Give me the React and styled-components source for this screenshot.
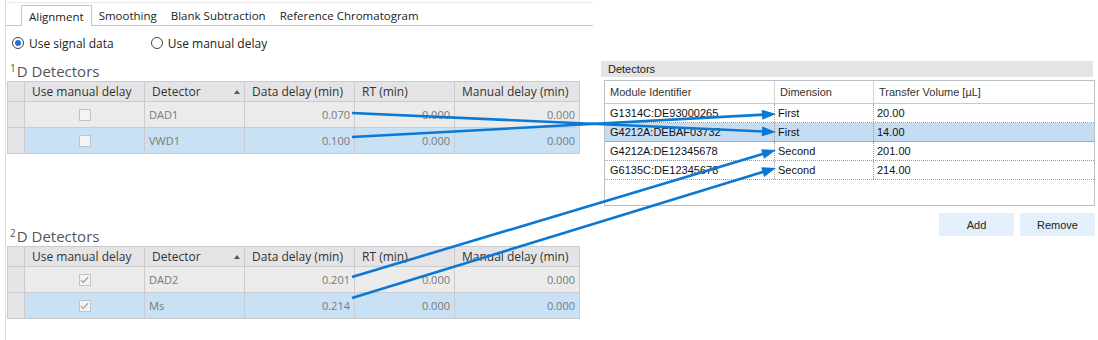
import React from 'react';
import styled, { createGlobalStyle } from 'styled-components';

const Global = createGlobalStyle`
  html, body { margin: 0; padding: 0; background: #fff; }
  body { font-family: "Open Sans", "Noto Sans", sans-serif; }
`;

const Page = styled.div`
  position: relative;
  width: 1098px;
  height: 340px;
  overflow: hidden;
  display: flex;
  align-items: flex-start;
  background: #fff;
`;

/* ---------- left panel ---------- */
const LeftPanel = styled.section`
  margin-left: 5px;
  width: 588px;
  height: 340px;
  box-sizing: border-box;
  border-left: 1px solid #dcdcdc;
  padding-top: 2px;
`;

const TabList = styled.div`
  display: flex;
  align-items: flex-end;
  height: 24px;
  box-sizing: border-box;
  border-top: 1px solid #ececec;
  border-bottom: 1px solid #c6c6c6;
  padding-left: 15px;
`;

const Tab = styled.div`
  height: 20px;
  display: flex;
  align-items: center;
  padding: 0 ${(p) => (p.$active ? '7px' : '6px')};
  margin-bottom: ${(p) => (p.$active ? '-1px' : '0')};
  background: #fff;
  border: ${(p) => (p.$active ? '1px solid #c6c6c6' : '1px solid transparent')};
  border-bottom: none;
  font-size: 11.5px;
  color: #222;
  white-space: nowrap;
`;

const RadioRow = styled.div`
  display: flex;
  align-items: center;
  gap: 37px;
  margin-top: 10px;
  padding-left: 6px;
  height: 14px;
`;

const RadioItem = styled.label`
  display: flex;
  align-items: center;
  gap: 5px;
  font-size: 12px;
  color: #222;
`;

const RadioCircle = styled.span`
  width: 12px;
  height: 12px;
  box-sizing: border-box;
  border-radius: 50%;
  border: 1px solid #444;
  display: flex;
  align-items: center;
  justify-content: center;
  background: #fff;
  &::after {
    content: '';
    width: 6px;
    height: 6px;
    border-radius: 50%;
    background: ${(p) => (p.$on ? '#1f74d0' : 'transparent')};
  }
`;

const Heading = styled.h2`
  margin: ${(p) => p.$top}px 0 0 0;
  padding-left: 4px;
  height: 19px;
  line-height: 19px;
  font-size: 15px;
  font-weight: 400;
  color: #555;
  white-space: nowrap;
`;

const Sup = styled.span`
  font-size: 10px;
  position: relative;
  top: -5px;
  margin-right: 1px;
`;

const TableGrid = styled.div`
  margin-left: 1px;
  display: grid;
  grid-template-columns: 16px 119px 99px 109px 99px 124px;
  grid-template-rows: 19px 25px 25px;
  gap: 1px;
  width: max-content;
  background: #cbcbcf;
  border: 1px solid #cbcbcf;
`;

const Corner = styled.div`
  background: #e4e4e6;
`;

const HeadCell = styled.div`
  background: #e4e4e6;
  display: flex;
  align-items: center;
  justify-content: space-between;
  padding: 0 4px 0 7px;
  font-size: 12px;
  color: #333;
  white-space: nowrap;
`;

const SortArrow = styled.span`
  width: 0;
  height: 0;
  border-left: 3px solid transparent;
  border-right: 3px solid transparent;
  border-bottom: 4px solid #555;
`;

const RowHead = styled.div`
  background: #e5e5e7;
`;

const Cell = styled.div`
  background: ${(p) => (p.$sel ? '#c8e1f4' : '#ebebec')};
  display: flex;
  align-items: center;
  justify-content: ${(p) => (p.$align === 'right' ? 'flex-end' : p.$align === 'center' ? 'center' : 'flex-start')};
  padding: 0 4px;
  font-size: 11px;
  color: #7a7a7a;
  white-space: nowrap;
`;

const CheckBox = styled.span`
  width: 12px;
  height: 12px;
  box-sizing: border-box;
  border: 1px solid #c3c3c3;
  background: #f4f4f4;
  display: flex;
  align-items: center;
  justify-content: center;
`;

/* ---------- right panel ---------- */
const RightPanel = styled.section`
  margin-left: 8px;
  margin-top: 61px;
  width: 494px;
  font-family: "Liberation Sans", Arial, sans-serif;
  font-size: 11px;
  color: #1a1a1a;
`;

const GroupBar = styled.div`
  width: 492px;
  height: 16px;
  line-height: 16px;
  box-sizing: border-box;
  padding-left: 7px;
  background: #e4e4e4;
  color: #222;
`;

const DataBox = styled.div`
  margin: 3px 0 0 3px;
  width: 491px;
  height: 126px;
  box-sizing: border-box;
  border: 1px solid #b8c1ca;
`;

const DataRow = styled.div`
  display: grid;
  grid-template-columns: 170px 99px 1fr;
  height: ${(p) => (p.$head ? 23 : 19)}px;
  box-sizing: border-box;
  border-bottom: 1px ${(p) => (p.$head ? 'solid #c8c8c8' : p.$sel ? 'solid #a9a9a9' : 'dotted #9c9c9c')};
  background: ${(p) => (p.$sel ? '#c6dcf3' : '#fff')};
`;

const DataCell = styled.div`
  display: flex;
  align-items: center;
  padding-left: ${(p) => (p.$first || p.$head ? 5 : 3)}px;
  border-right: 1px ${(p) => (p.$head ? 'solid #d6d6d6' : 'dotted #9c9c9c')};
  color: ${(p) => (p.$head ? '#333' : '#111')};
  white-space: nowrap;
  overflow: hidden;
  &:last-child { border-right: none; }
`;

const ButtonRow = styled.div`
  display: flex;
  justify-content: flex-end;
  gap: 6px;
  margin-top: 7px;
`;

const Button = styled.button`
  width: 75px;
  height: 23px;
  border: none;
  background: #e3f0fb;
  font-family: "Liberation Sans", Arial, sans-serif;
  font-size: 11px;
  color: #222;
  padding: 0;
`;

/* ---------- arrows overlay ---------- */
const ArrowLayer = styled.svg`
  position: absolute;
  left: 0;
  top: 0;
  pointer-events: none;
`;

const ARROW_COLOR = '#0b79d3';

function Arrow({ x1, y1, x2, y2 }) {
  const len = 14;
  const half = 5;
  const dx = x2 - x1;
  const dy = y2 - y1;
  const d = Math.hypot(dx, dy);
  const ux = dx / d;
  const uy = dy / d;
  const bx = x2 - ux * len;
  const by = y2 - uy * len;
  const px = -uy * half;
  const py = ux * half;
  const pts = `${x2},${y2} ${bx + px},${by + py} ${bx - px},${by - py}`;
  return (
    <g>
      <line x1={x1} y1={y1} x2={bx + ux * 2} y2={by + uy * 2} stroke={ARROW_COLOR} strokeWidth="2.6" />
      <polygon points={pts} fill={ARROW_COLOR} />
    </g>
  );
}

const Check = () => (
  <svg width="9" height="8" viewBox="0 0 9 8">
    <path d="M1 4.2 L3.4 6.4 L8 1.2" fill="none" stroke="#a3a3a3" strokeWidth="1.3" />
  </svg>
);

function DetectorTable({ rows, checked }) {
  const headers = ['Use manual delay', 'Detector', 'Data delay (min)', 'RT (min)', 'Manual delay (min)'];
  return (
    <TableGrid>
      <Corner />
      {headers.map((h) => (
        <HeadCell key={h}>
          {h}
          {h === 'Detector' && <SortArrow />}
        </HeadCell>
      ))}
      {rows.map((r, i) => {
        const sel = i === 1;
        return (
          <React.Fragment key={r.name}>
            <RowHead />
            <Cell $sel={sel} $align="center">
              <CheckBox>{checked && <Check />}</CheckBox>
            </Cell>
            <Cell $sel={sel}>{r.name}</Cell>
            <Cell $sel={sel} $align="right">{r.delay}</Cell>
            <Cell $sel={sel} $align="right">0.000</Cell>
            <Cell $sel={sel} $align="right">0.000</Cell>
          </React.Fragment>
        );
      })}
    </TableGrid>
  );
}

const modules = [
  { id: 'G1314C:DE93000265', dim: 'First', vol: '20.00' },
  { id: 'G4212A:DEBAF03732', dim: 'First', vol: '14.00', sel: true },
  { id: 'G4212A:DE12345678', dim: 'Second', vol: '201.00' },
  { id: 'G6135C:DE12345678', dim: 'Second', vol: '214.00' },
];

export default function App() {
  return (
    <>
      <Global />
      <Page>
        <LeftPanel>
          <TabList>
            <Tab $active>Alignment</Tab>
            <Tab>Smoothing</Tab>
            <Tab>Blank Subtraction</Tab>
            <Tab>Reference Chromatogram</Tab>
          </TabList>
          <RadioRow>
            <RadioItem>
              <RadioCircle $on />
              Use signal data
            </RadioItem>
            <RadioItem>
              <RadioCircle />
              Use manual delay
            </RadioItem>
          </RadioRow>
          <Heading $top={12}>
            <Sup>1</Sup>D Detectors
          </Heading>
          <DetectorTable
            rows={[
              { name: 'DAD1', delay: '0.070' },
              { name: 'VWD1', delay: '0.100' },
            ]}
          />
          <Heading $top={73}>
            <Sup>2</Sup>D Detectors
          </Heading>
          <DetectorTable
            checked
            rows={[
              { name: 'DAD2', delay: '0.201' },
              { name: 'Ms', delay: '0.214' },
            ]}
          />
        </LeftPanel>

        <RightPanel>
          <GroupBar>Detectors</GroupBar>
          <DataBox>
            <DataRow $head>
              <DataCell $head>Module Identifier</DataCell>
              <DataCell $head>Dimension</DataCell>
              <DataCell $head>Transfer Volume [µL]</DataCell>
            </DataRow>
            {modules.map((m) => (
              <DataRow key={m.id} $sel={m.sel}>
                <DataCell $first>{m.id}</DataCell>
                <DataCell>{m.dim}</DataCell>
                <DataCell>{m.vol}</DataCell>
              </DataRow>
            ))}
          </DataBox>
          <ButtonRow>
            <Button>Add</Button>
            <Button>Remove</Button>
          </ButtonRow>
        </RightPanel>

        <ArrowLayer width="1098" height="340" viewBox="0 0 1098 340">
          <Arrow x1={352} y1={113} x2={776} y2={132} />
          <Arrow x1={352} y1={137} x2={776} y2={114} />
          <Arrow x1={352} y1={277} x2={776} y2={150} />
          <Arrow x1={352} y1={298} x2={776} y2={168} />
        </ArrowLayer>
      </Page>
    </>
  );
}
